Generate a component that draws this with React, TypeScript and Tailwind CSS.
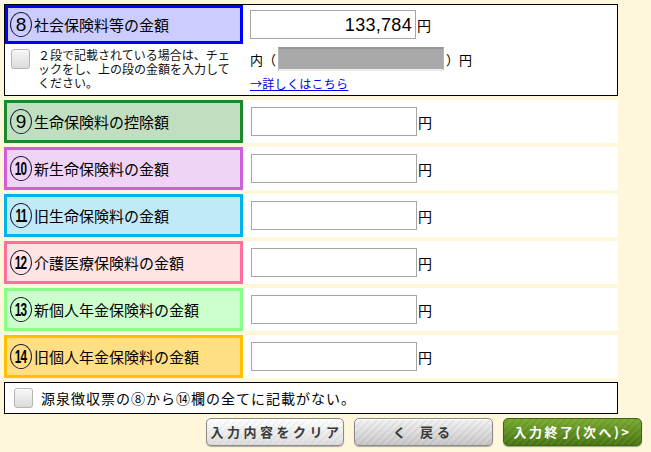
import React from "react";

const JP = "font-['Noto_Sans_CJK_JP','Noto_Sans',sans-serif]";

function Circ({ n }: { n: string }) {
  const two = n.length > 1;
  return (
    <span className="inline-flex w-[22px] h-[25px] shrink-0 items-center justify-center rounded-[50%] border-[1.5px] border-[#1c1c3a] bg-transparent">
      <span
        className={`font-['Liberation_Sans',sans-serif] text-[19px] leading-none text-black ${two ? "scale-x-[0.62] tracking-[-1px] font-bold text-[18px]" : ""}`}
      >
        {n}
      </span>
    </span>
  );
}

function CheckBox() {
  return (
    <div className="w-[19px] h-[20px] shrink-0 rounded-[3px] border border-[#b4b4b4] bg-[linear-gradient(#f6f6f6,#dcdcdc)] shadow-[inset_0_1px_0_#fff]" />
  );
}

function Yen() {
  return <span className="ml-[1px] text-[14px] leading-none text-black">円</span>;
}

function Input({ value }: { value?: string }) {
  return (
    <div className="w-[166px] h-[29px] shrink-0 border border-[#a6a6a6] bg-white flex items-center justify-end pr-[3px]">
      {value && (
        <span className="font-['Liberation_Sans',sans-serif] text-[18px] leading-none text-black tracking-[0.3px]">
          {value}
        </span>
      )}
    </div>
  );
}

const rows = [
  { n: "9", t: "生命保険料の控除額", bg: "bg-[#c0dfc0]", bd: "border-[#1b8a2b]" },
  { n: "10", t: "新生命保険料の金額", bg: "bg-[#f0d4f6]", bd: "border-[#d05fe0]" },
  { n: "11", t: "旧生命保険料の金額", bg: "bg-[#c0eaf8]", bd: "border-[#00b2ee]" },
  { n: "12", t: "介護医療保険料の金額", bg: "bg-[#ffe3e3]", bd: "border-[#ff6e9c]" },
  { n: "13", t: "新個人年金保険料の金額", bg: "bg-[#ccffcc]", bd: "border-[#88ff88]" },
  { n: "14", t: "旧個人年金保険料の金額", bg: "bg-[#ffde84]", bd: "border-[#ffc000]" },
];

export default function App() {
  return (
    <div className={`w-[651px] h-[452px] bg-[#fff7dc] pt-[4px] pl-[4px] ${JP} text-black overflow-hidden`}>
      <div className="w-[614px] flex flex-col gap-[4px]">
        {/* Section 8 */}
        <div className="h-[92px] border border-black bg-white flex">
          <div className="w-[238px] shrink-0 flex flex-col">
            <div className="h-[39px] border-[3px] border-[#0000ff] bg-[#ccccff] flex items-center pl-[2px] gap-[2px]">
              <Circ n="8" />
              <span className="text-[15px] leading-none">社会保険料等の金額</span>
            </div>
            <div className="flex pt-[4px] pl-[6px] gap-[8px]">
              <div className="pt-[1px]">
                <CheckBox />
              </div>
              <div className="flex flex-col text-[12px] leading-[14px] text-[#111] whitespace-nowrap">
                <span className="block h-[14px] overflow-visible">２段で記載されている場合は、チェ</span>
                <span className="block h-[14px] overflow-visible">ックをし、上の段の金額を入力して</span>
                <span className="block h-[14px] overflow-visible">ください。</span>
              </div>
            </div>
          </div>
          <div className="flex-1 flex flex-col pl-[7px] pt-[5px]">
            <div className="flex items-center">
              <Input value="133,784" />
              <Yen />
            </div>
            <div className="flex items-center mt-[8px] text-[13px] leading-none whitespace-nowrap">
              <span className="mr-[2px]">内（</span>
              <div className="w-[166px] h-[24px] bg-[#a9a9a9] border-t-[2px] border-t-[#979797] border-b-[2px] border-b-[#ececec] border-x border-x-[#b5b5b5]" />
              <span className="ml-[2px]">）円</span>
            </div>
            <a className="mt-[7px] text-[12px] leading-none text-[#0000ee] underline tracking-[0.3px] self-start" href="#">
              →詳しくはこちら
            </a>
          </div>
        </div>

        {rows.map((r) => (
          <div key={r.n} className="h-[43px] flex">
            <div className={`w-[239px] shrink-0 border-[3px] ${r.bd} ${r.bg} flex items-center pl-[3px] gap-[2px]`}>
              <Circ n={r.n} />
              <span className="text-[15px] leading-none">{r.t}</span>
            </div>
            <div className="flex-1 bg-white flex items-center pl-[8px]">
              <Input />
              <Yen />
            </div>
          </div>
        ))}

        <div className="h-[32px] border border-black bg-white flex items-center pl-[9px] gap-[8px]">
          <CheckBox />
          <span className="text-[14px] leading-none tracking-[1px]">源泉徴収票の⑧から⑭欄の全てに記載がない。</span>
        </div>

        <div className="flex justify-end gap-[10px] mr-[-24px]">
          <button className="w-[138px] h-[28px] rounded-[5px] border border-[#8a8a8a] bg-[image:repeating-linear-gradient(135deg,rgba(0,0,0,0.03)_0_2px,transparent_2px_5px),linear-gradient(#ffffff,#dedede)] shadow-[inset_0_1px_0_#fff,0_1px_1px_rgba(0,0,0,0.3)] text-[13px] font-bold text-[#3a3a3a] tracking-[3.5px] flex items-center justify-center pl-[3px]">
            入力内容をクリア
          </button>
          <button className="w-[139px] h-[28px] rounded-[5px] border border-[#8a8a8a] bg-[image:repeating-linear-gradient(135deg,rgba(0,0,0,0.05)_0_2px,transparent_2px_5px),linear-gradient(#f4f4f4,#c9c9c9)] shadow-[inset_0_1px_0_#fff,0_1px_1px_rgba(0,0,0,0.3)] text-[13px] font-bold text-[#3a3a3a] flex items-center justify-center gap-[14px]">
            <span>く</span>
            <span className="tracking-[4px]">戻る</span>
          </button>
          <button className="w-[139px] h-[28px] rounded-[5px] border border-[#3d6610] bg-[image:repeating-linear-gradient(135deg,rgba(255,255,255,0.08)_0_2px,transparent_2px_5px),linear-gradient(#76a630,#46730f)] shadow-[0_1px_1px_rgba(0,0,0,0.35)] text-[13px] font-bold text-white tracking-[2.5px] flex items-center justify-center">
            入力終了(次へ)&gt;
          </button>
        </div>
      </div>
    </div>
  );
}
